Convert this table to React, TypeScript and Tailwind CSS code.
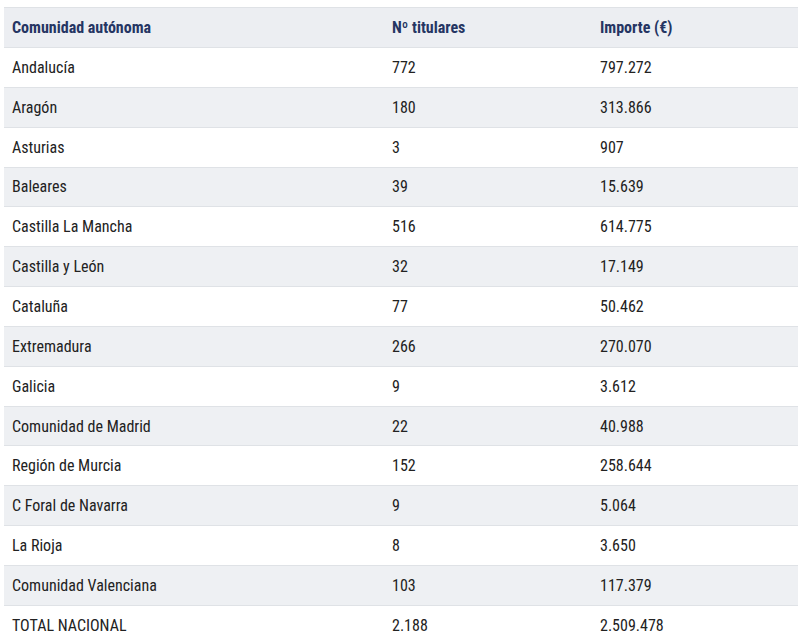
import React from 'react';

const rows: [string, string, string][] = [
  ['Andalucía', '772', '797.272'],
  ['Aragón', '180', '313.866'],
  ['Asturias', '3', '907'],
  ['Baleares', '39', '15.639'],
  ['Castilla La Mancha', '516', '614.775'],
  ['Castilla y León', '32', '17.149'],
  ['Cataluña', '77', '50.462'],
  ['Extremadura', '266', '270.070'],
  ['Galicia', '9', '3.612'],
  ['Comunidad de Madrid', '22', '40.988'],
  ['Región de Murcia', '152', '258.644'],
  ['C Foral de Navarra', '9', '5.064'],
  ['La Rioja', '8', '3.650'],
  ['Comunidad Valenciana', '103', '117.379'],
  ['TOTAL NACIONAL', '2.188', '2.509.478'],
];

const App = () => {
  return (
    <div
      className="w-[806px] h-[644px] overflow-hidden bg-white pt-[7px] pl-[4px]"
      style={{ fontFamily: '"Roboto Condensed", Roboto, "Liberation Sans", sans-serif' }}
    >
      <table className="w-[794px] border-collapse text-[16px] text-[#222]">
        <thead>
          <tr className="h-[40px] bg-[#eceef2] border-t border-b border-[#dfe2e6]">
            <th className="w-[380px] px-2 pt-px text-left font-bold text-[#253563]">Comunidad autónoma</th>
            <th className="w-[208px] px-2 pt-px text-left font-bold text-[#253563]">Nº titulares</th>
            <th className="px-2 pt-px text-left font-bold text-[#253563]">Importe (€)</th>
          </tr>
        </thead>
        <tbody>
          {rows.map(([name, count, amount], i) => (
            <tr
              key={name}
              className={`h-[39.85px] border-b border-[#dfe2e6] ${i % 2 === 1 ? 'bg-[#eef0f3]' : 'bg-white'}`}
            >
              <td className="px-2 pt-px">{name}</td>
              <td className="px-2 pt-px">{count}</td>
              <td className="px-2 pt-px">{amount}</td>
            </tr>
          ))}
        </tbody>
      </table>
    </div>
  );
};

export default App;
